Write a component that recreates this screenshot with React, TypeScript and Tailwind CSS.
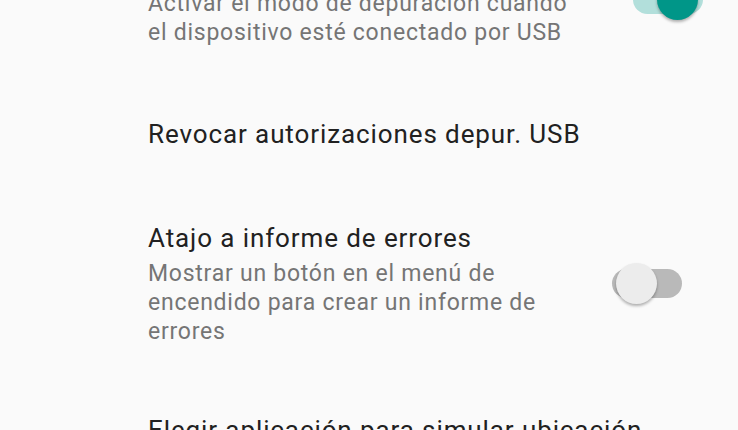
import React from 'react';

interface Item {
  title: string;
  summary?: string[];
  toggle?: 'on' | 'off';
}

function Toggle({ on, shift }: { on: boolean; shift: string }) {
  return (
    <div className={`relative h-[41px] w-[70px] shrink-0 ${shift}`}>
      <div
        className={`absolute left-0 top-[6px] h-[29px] w-[70px] rounded-full ${
          on ? 'bg-[#b2dfdb]' : 'bg-[#b9b9b9]'
        }`}
      />
      <div
        className={`absolute top-0 h-[41px] w-[41px] rounded-full shadow-[0_2px_3px_rgba(0,0,0,0.3)] ${
          on ? 'left-[24px] bg-[#009688]' : 'left-[4px] bg-[#ececec]'
        }`}
      />
    </div>
  );
}

function Row({ item, className }: { item: Item; className: string }) {
  return (
    <div className={`flex items-center pl-[148px] ${className}`}>
      <div className={item.toggle ? 'w-[418px]' : 'w-[560px]'}>
        <div className="text-[26px] leading-[34px] tracking-[0.9px] text-[#212121]">{item.title}</div>
        {item.summary && (
          <div className="mt-[4px] whitespace-nowrap text-[23px] leading-[29px] tracking-[0.75px] text-[#757575]">
            {item.summary.map((line) => (
              <div key={line}>{line}</div>
            ))}
          </div>
        )}
      </div>
      {item.toggle === 'on' && <Toggle on shift="ml-[67px]" />}
      {item.toggle === 'off' && <Toggle on={false} shift="ml-[46px]" />}
    </div>
  );
}

export default function App() {
  return (
    <div
      className="h-[430px] w-[738px] overflow-hidden bg-[#fafafa]"
      style={{ fontFamily: 'Roboto, "Noto Sans", sans-serif' }}
    >
      <Row
        className="-mt-[84px] py-[35px]"
        item={{
          title: 'Depuración USB',
          summary: ['Activar el modo de depuración cuando', 'el dispositivo esté conectado por USB'],
          toggle: 'on',
        }}
      />
      <Row className="py-[35px]" item={{ title: 'Revocar autorizaciones depur. USB' }} />
      <Row
        className="pt-[35px] pb-[33px]"
        item={{
          title: 'Atajo a informe de errores',
          summary: ['Mostrar un botón en el menú de', 'encendido para crear un informe de', 'errores'],
          toggle: 'off',
        }}
      />
      <Row
        className="pt-[34px] pb-[35px]"
        item={{
          title: 'Elegir aplicación para simular ubicación',
          summary: ['No se ha establecido ninguna aplicación', 'para simular ubicación'],
        }}
      />
    </div>
  );
}
